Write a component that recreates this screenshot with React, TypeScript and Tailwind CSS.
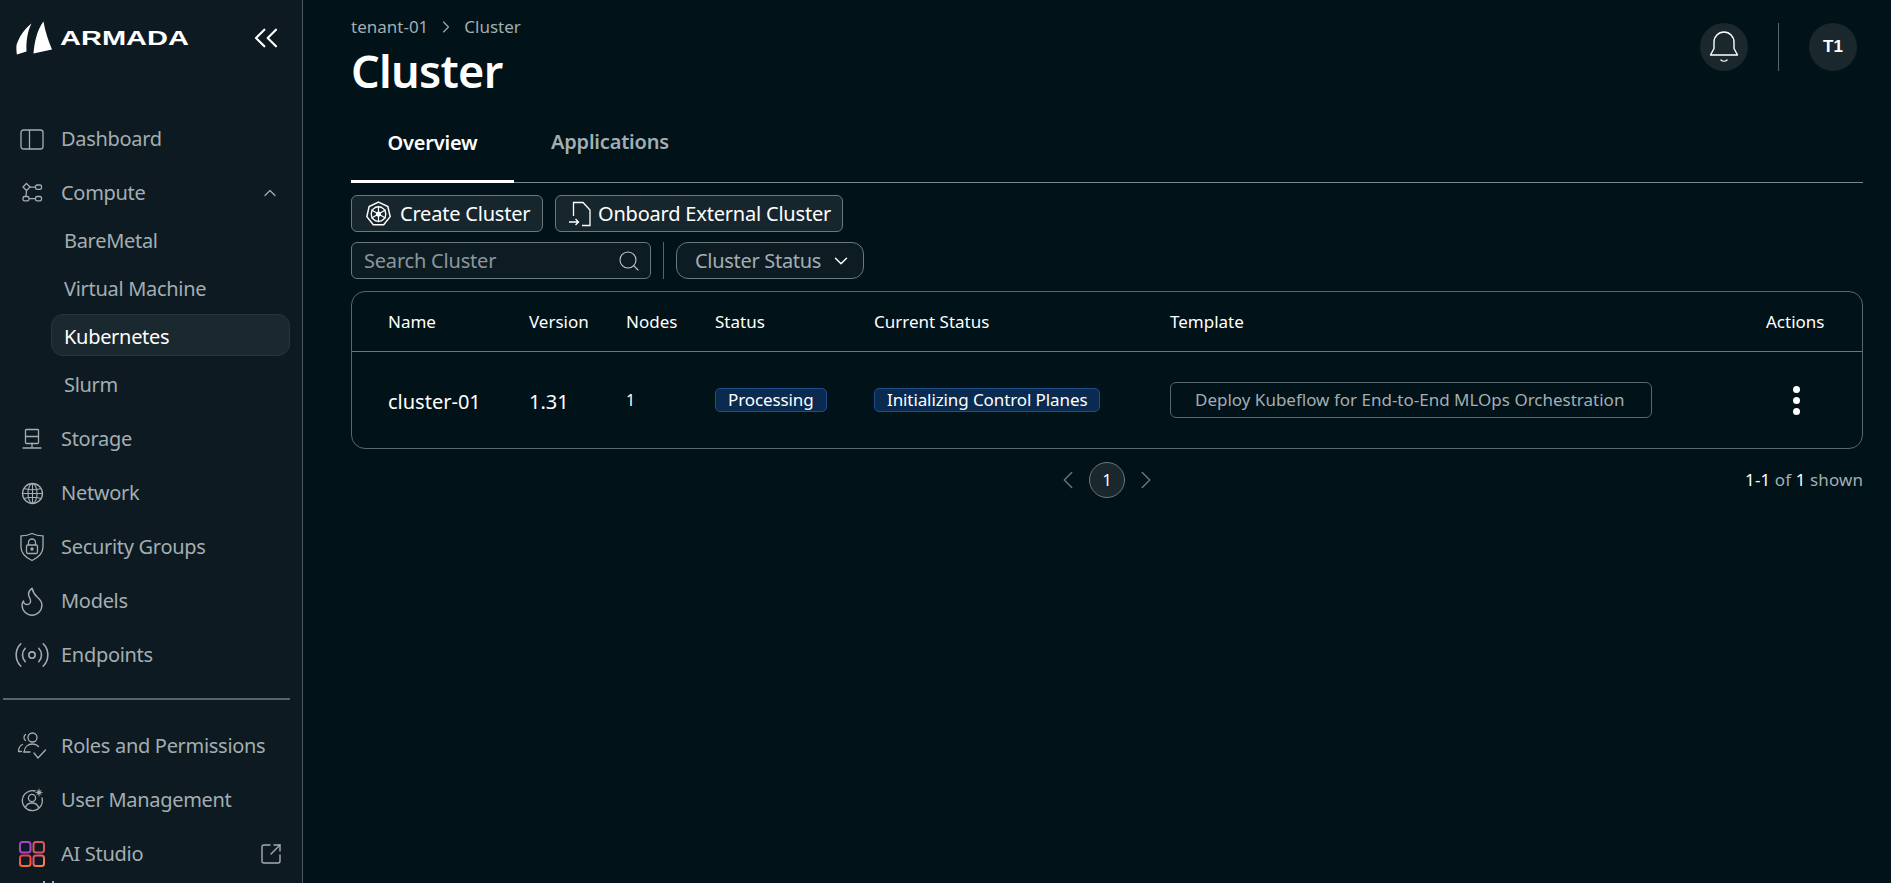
import React from "react";
import {
  ChevronDown,
  ChevronLeft,
  ChevronRight,
  ChevronUp,
  ChevronsLeft,
  Flame,
  Radio,
  Search,
  SquareArrowOutUpRight,
} from "lucide-react";

function DashboardIcon() {
  return (
    <svg width="24" height="21" viewBox="0 0 24 21" fill="none" stroke="currentColor" strokeWidth="1.3">
      <rect x="1" y="1" width="22" height="19" rx="2.500" />
      <path d="M9.500 1v19" />
    </svg>
  );
}

function ComputeIcon() {
  return (
    <svg width="22" height="22" viewBox="0 0 22 22" fill="none" stroke="currentColor" strokeWidth="1.3">
      <path d="M5.500 1.500 9 5l-3.500 3.500L2 5z" />
      <rect x="14.500" y="3" width="6" height="4.400" rx="1.600" />
      <rect x="2" y="14.500" width="6" height="4.400" rx="1.600" />
      <rect x="14.500" y="14.500" width="6" height="4.400" rx="1.600" />
      <path d="M9 5.200h5.500M8 16.700h6.500M5.500 8.500l-.5 6" />
    </svg>
  );
}

function StorageIcon() {
  return (
    <svg width="22" height="22" viewBox="0 0 22 22" fill="none" stroke="currentColor" strokeWidth="1.3">
      <rect x="4.500" y="1.500" width="13" height="14" rx="0.800" />
      <path d="M4.500 8.500h13M11 15.500V20M1.500 20h19" />
    </svg>
  );
}

function GlobeIcon() {
  return (
    <svg width="23" height="23" viewBox="0 0 23 23" fill="none" stroke="currentColor" strokeWidth="1.100">
      <circle cx="11.500" cy="11.500" r="10" strokeWidth="1.300" />
      <ellipse cx="11.500" cy="11.500" rx="4.500" ry="10" />
      <path d="M11.500 1.500v20M1.500 11.500h20M3 6.500c5 1.500 12 1.500 17 0M3 16.500c5-1.500 12-1.500 17 0" />
    </svg>
  );
}

function ShieldLockIcon() {
  return (
    <svg width="26" height="30" viewBox="0 0 26 30" fill="none" stroke="currentColor" strokeWidth="1.300">
      <path d="M13 1.500c3 1.600 7 2.400 11 2.400v11c0 6.200-4.600 10.500-11 13.600C6.600 25.400 2 21.100 2 14.900v-11c4 0 8-.8 11-2.400z" />
      <rect x="7.500" y="13" width="11" height="8.500" rx="1.500" />
      <path d="M9.500 13V10.500a3.500 3.500 0 0 1 7 0V13" />
      <circle cx="13" cy="17" r="1" fill="currentColor" />
    </svg>
  );
}

function RolesIcon() {
  return (
    <svg width="30" height="30" viewBox="0 0 30 30" fill="none" stroke="currentColor" strokeWidth="1.300" strokeLinecap="round">
      <circle cx="15.500" cy="6.500" r="4.500" />
      <path d="M8.500 3.500c-2 1.500-2 4.500 0 6" />
      <path d="M7 21c.5-5 4-8 8.500-8 2.500 0 4.500.8 6 2.500" />
      <path d="M1.500 19.500c.4-3 1.800-5 4-6" />
      <path d="M1.500 20.500h3M7 21h6" />
      <path d="m17 22 4 5 7.500-8" />
    </svg>
  );
}

function UserGearIcon() {
  return (
    <svg width="24" height="24" viewBox="0 0 24 24" fill="none" stroke="currentColor" strokeWidth="1.300" strokeLinecap="round">
      <path d="M15 3a10 10 0 1 0 7 7" />
      <circle cx="12" cy="10" r="3.600" />
      <path d="M5.500 19.500c1-3 3.500-4.500 6.500-4.500s5.500 1.500 6.500 4.500" />
      <circle cx="19" cy="4.500" r="2" fill="currentColor" stroke="none" />
      <path d="M19 1v7M15.800 4.500h6.400M16.800 2.300l4.400 4.400M21.200 2.300l-4.400 4.400" strokeWidth="0.800" />
    </svg>
  );
}

function StudioIcon() {
  return (
    <svg width="26" height="26" viewBox="0 0 26 26" fill="none" strokeWidth="2">
      <defs>
        <linearGradient id="studio" x1="0" y1="0" x2="1" y2="1">
          <stop offset="0" stopColor="#e0457a" />
          <stop offset="1" stopColor="#ff8a3c" />
        </linearGradient>
        <linearGradient id="studio2" x1="0" y1="0" x2="0" y2="1">
          <stop offset="0" stopColor="#ef3b4a" />
          <stop offset="1" stopColor="#ff6a2c" />
        </linearGradient>
      </defs>
      <rect x="1" y="1" width="10.500" height="10.500" rx="2.500" stroke="#a347c9" />
      <rect x="14.500" y="1" width="10.500" height="10.500" rx="2.500" stroke="#d9565f" />
      <rect x="1" y="14.500" width="10.500" height="10.500" rx="2.500" stroke="url(#studio2)" />
      <rect x="14.500" y="14.500" width="10.500" height="10.500" rx="2.500" stroke="url(#studio)" />
    </svg>
  );
}

function KubeIcon() {
  return (
    <svg width="25" height="25" viewBox="0 0 24 24" fill="none" stroke="currentColor" strokeWidth="1.400">
      <path d="M12 1 21 5.300l2.200 9.700-6.200 7.800H7L.8 15 3 5.300z" />
      <circle cx="12" cy="12.500" r="7" strokeWidth="1.300" />
      <circle cx="12" cy="12.500" r="1.800" fill="currentColor" />
      <path d="M12 4.500v16M5 8.500l14 8M19 8.500l-14 8" strokeWidth="1.100" />
    </svg>
  );
}

function OnboardIcon() {
  return (
    <svg width="24" height="26" viewBox="0 0 24 26" fill="none" stroke="currentColor" strokeWidth="1.300">
      <path d="M5.500 15V1.500H15l7 7.500v15.500h-8" />
      <path d="M1 21h9M7.500 18l3 3-3 3" />
    </svg>
  );
}

function BellIcon() {
  return (
    <svg width="30" height="34" viewBox="0 0 30 34" fill="none" stroke="currentColor" strokeWidth="1.400" strokeLinejoin="round">
      <path d="M1.500 25 5 18.500V12a10 10 0 0 1 20 0v6.500L28.500 25z" />
      <path d="M12 30c1.600 1.500 4.400 1.500 6 0" strokeLinecap="round" />
    </svg>
  );
}

function Logo() {
  return (
    <div className="flex items-center">
      <svg width="37" height="34" viewBox="0 0 37 34" fill="white">
        <path d="M15.500 2.500C9 7 3 16 .5 24c-.3 3.500 0 7 .4 9.500l9.600-3C10 20 11.500 10 15.500 2.500z" />
        <path d="M27.500.5C21 9 18.500 21 17.500 32.500L36 28.500C32.500 20 29 10 27.500.5z" />
      </svg>
      <span className="ml-[7px] inline-block origin-left scale-x-[1.45] font-['Liberation_Sans',sans-serif] text-[20px] leading-none font-bold text-white">
        ARMADA
      </span>
    </div>
  );
}

const topNav = [
  { label: "Dashboard", icon: <DashboardIcon /> },
  { label: "Compute", icon: <ComputeIcon />, open: true },
];

const midNav = [
  { label: "Storage", icon: <StorageIcon /> },
  { label: "Network", icon: <GlobeIcon /> },
  { label: "Security Groups", icon: <ShieldLockIcon /> },
  { label: "Models", icon: <Flame size={34} strokeWidth={1} /> },
  { label: "Endpoints", icon: <Radio size={38} strokeWidth={1} /> },
];

const bottomNav = [
  { label: "Roles and Permissions", icon: <RolesIcon /> },
  { label: "User Management", icon: <UserGearIcon /> },
  { label: "AI Studio", icon: <StudioIcon />, external: true },
];

const subNav = ["BareMetal", "Virtual Machine", "Kubernetes", "Slurm"];

function NavRow({ label, icon, open, external }: { label: string; icon: React.ReactNode; open?: boolean; external?: boolean }) {
  return (
    <div className="flex h-[54px] shrink-0 items-center text-[20px] tracking-[-0.3px] text-[#a3aeb2]">
      <div className="flex w-[61px] shrink-0 justify-center pl-[3px] text-[#a3aeb2]">{icon}</div>
      <span className="flex-1">{label}</span>
      {open && <ChevronUp size={20} strokeWidth={1.5} className="mr-[22px]" />}
      {external && <SquareArrowOutUpRight size={24} strokeWidth={1.4} className="mr-[19px]" />}
    </div>
  );
}

function Sidebar() {
  return (
    <aside className="flex h-[883px] w-[303px] shrink-0 flex-col overflow-hidden border-r border-[#4b595f] bg-[#0d1a21]">
      <div className="flex h-[112px] shrink-0 items-start justify-between pt-[21px] pr-[16px] pl-[16px]">
        <Logo />
        <ChevronsLeft size={40} strokeWidth={1.300} className="mt-[-3px] text-white" />
      </div>
      {topNav.map((item) => (
        <NavRow key={item.label} {...item} />
      ))}
      <div className="mt-[-3px] flex shrink-0 flex-col">
        {subNav.map((item) =>
          item === "Kubernetes" ? (
            <div
              key={item}
              className="mt-[1px] mr-[12px] mb-[5px] ml-[51px] flex h-[42px] items-center rounded-[12px] border border-[#27363d] bg-[#1a2930] pt-[3px] pl-[12px] text-[20px] tracking-[-0.3px] text-white"
            >
              {item}
            </div>
          ) : (
            <div key={item} className="flex h-[48px] items-center pl-[64px] text-[20px] tracking-[-0.3px] text-[#a3aeb2]">
              {item}
            </div>
          )
        )}
      </div>
      <div className="mt-[3px] shrink-0">
        {midNav.map((item) => (
          <NavRow key={item.label} {...item} />
        ))}
      </div>
      <div className="mt-[16px] mr-[12px] mb-[19px] ml-[3px] h-[2px] shrink-0 bg-[#56656b]" />
      {bottomNav.map((item) => (
        <NavRow key={item.label} {...item} />
      ))}
      <div className="flex shrink-0 gap-[7px] pl-[43px]">
        <span className="h-[2px] w-[2px] bg-[#a3aeb2]" />
        <span className="h-[2px] w-[2px] bg-[#a3aeb2]" />
      </div>
    </aside>
  );
}

function Header() {
  return (
    <div className="flex items-start justify-between">
      <div>
        <div className="flex h-[24px] items-center text-[17px] text-[#a3aeb2]">
          tenant-01
          <ChevronRight size={20} strokeWidth={1.3} className="mx-[8px]" />
          Cluster
        </div>
        <h1 className="mt-[3px] text-[45px] leading-[58px] font-semibold tracking-[-0.7px] text-white">Cluster</h1>
      </div>
      <div className="mt-[8px] mr-[6px] flex items-center">
        <div className="flex h-[48px] w-[48px] items-center justify-center rounded-full bg-[#1a282e] text-white">
          <BellIcon />
        </div>
        <div className="mx-[30px] h-[48px] w-px bg-[#56656b]" />
        <div className="flex h-[48px] w-[48px] items-center justify-center rounded-full bg-[#1a282e] font-['Liberation_Sans',sans-serif] text-[17px] font-bold text-white">
          T1
        </div>
      </div>
    </div>
  );
}

function Tabs() {
  return (
    <div className="mt-[16px] flex h-[67px] items-stretch border-b border-[#7b888d]">
      <div className="mb-[-1px] flex w-[163px] items-center justify-center border-b-[3px] border-white pb-[11px] text-[20px] font-semibold tracking-[-0.2px] text-white">
        Overview
      </div>
      <div className="flex items-center pb-[14px] pl-[37px] text-[20px] font-semibold tracking-[-0.2px] text-[#a3aeb2]">Applications</div>
    </div>
  );
}

function Toolbar() {
  return (
    <div className="mt-[12px] flex flex-col gap-[10px]">
      <div className="flex gap-[12px]">
        <button className="flex h-[37px] w-[192px] items-center gap-[9px] rounded-[6px] border border-[#6b787d] bg-[#17262d] pl-[14px] text-[20px] tracking-[-0.2px] text-white">
          <KubeIcon />
          Create Cluster
        </button>
        <button className="flex h-[37px] w-[288px] items-center gap-[6px] rounded-[6px] border border-[#6b787d] bg-[#17262d] pl-[12px] text-[20px] tracking-[-0.2px] text-white">
          <OnboardIcon />
          Onboard External Cluster
        </button>
      </div>
      <div className="flex items-stretch">
        <div className="flex h-[37px] w-[300px] items-center justify-between rounded-[6px] border border-[#6b787d] bg-[#0d1c23] pr-[9px] pl-[12px] text-[20px] tracking-[-0.2px] text-[#8b979b]">
          Search Cluster
          <Search size={24} strokeWidth={1.100} className="text-[#c2cacd]" />
        </div>
        <div className="mx-[12px] w-px bg-[#56656b]" />
        <div className="flex h-[37px] w-[188px] items-center rounded-[12px] border border-[#6b787d] bg-[#0d1c23] pl-[18px] text-[20px] tracking-[-0.3px] text-[#a3aeb2]">
          Cluster Status
          <ChevronDown size={22} strokeWidth={1.6} className="ml-[9px] text-white" />
        </div>
      </div>
    </div>
  );
}

function Badge({ children }: { children: React.ReactNode }) {
  return (
    <span className="flex h-[24px] w-fit items-center rounded-[5px] border border-[#1f4f8a] bg-[#0a2a50] px-[12px] text-[17px] tracking-[-0.1px] text-white">
      {children}
    </span>
  );
}

const cols = "grid grid-cols-[141px_97px_89px_159px_296px_1fr_auto] items-center pr-[36px] pl-[36px]";

function ClusterTable() {
  return (
    <div className="mt-[12px] overflow-hidden rounded-[14px] border border-[#5a676d]">
      <div className={`${cols} h-[60px] border-b border-[#6b787d] text-[17px] text-white`}>
        <span>Name</span>
        <span>Version</span>
        <span>Nodes</span>
        <span>Status</span>
        <span>Current Status</span>
        <span>Template</span>
        <span className="w-[60px]">Actions</span>
      </div>
      <div className={`${cols} h-[96px] text-white`}>
        <span className="pt-[4px] text-[20px]">cluster-01</span>
        <span className="pt-[4px] text-[20px]">1.31</span>
        <span className="text-[16px]">1</span>
        <Badge>Processing</Badge>
        <Badge>Initializing Control Planes</Badge>
        <span className="flex h-[36px] w-[482px] items-center rounded-[6px] border border-[#5a676d] pl-[24px] text-[17px] text-[#a3aeb2]">
          Deploy Kubeflow for End-to-End MLOps Orchestration
        </span>
        <div className="flex w-[60px] flex-col items-center gap-[4px]">
          <span className="h-[7px] w-[7px] rounded-full bg-white" />
          <span className="h-[7px] w-[7px] rounded-full bg-white" />
          <span className="h-[7px] w-[7px] rounded-full bg-white" />
        </div>
      </div>
    </div>
  );
}

function Pagination() {
  return (
    <div className="relative mt-[13px] flex h-[36px] items-center justify-center">
      <ChevronLeft size={30} strokeWidth={1.100} className="text-[#6b787d]" />
      <span className="mx-[6px] flex h-[36px] w-[36px] items-center justify-center rounded-full border border-[#6b787d] bg-[#1a282e] text-[16px] text-white">
        1
      </span>
      <ChevronRight size={30} strokeWidth={1.100} className="text-[#6b787d]" />
      <span className="absolute right-0 text-[17px] tracking-[0.1px] text-[#a3aeb2]">
        <span className="text-white">1-1</span> of <span className="text-white">1</span> shown
      </span>
    </div>
  );
}

export default function App() {
  return (
    <div className="flex h-[883px] w-[1891px] overflow-hidden bg-[#011218] font-['Noto_Sans',sans-serif]">
      <Sidebar />
      <main className="min-w-0 flex-1 pt-[15px] pr-[28px] pl-[48px]">
        <Header />
        <Tabs />
        <Toolbar />
        <ClusterTable />
        <Pagination />
      </main>
    </div>
  );
}
